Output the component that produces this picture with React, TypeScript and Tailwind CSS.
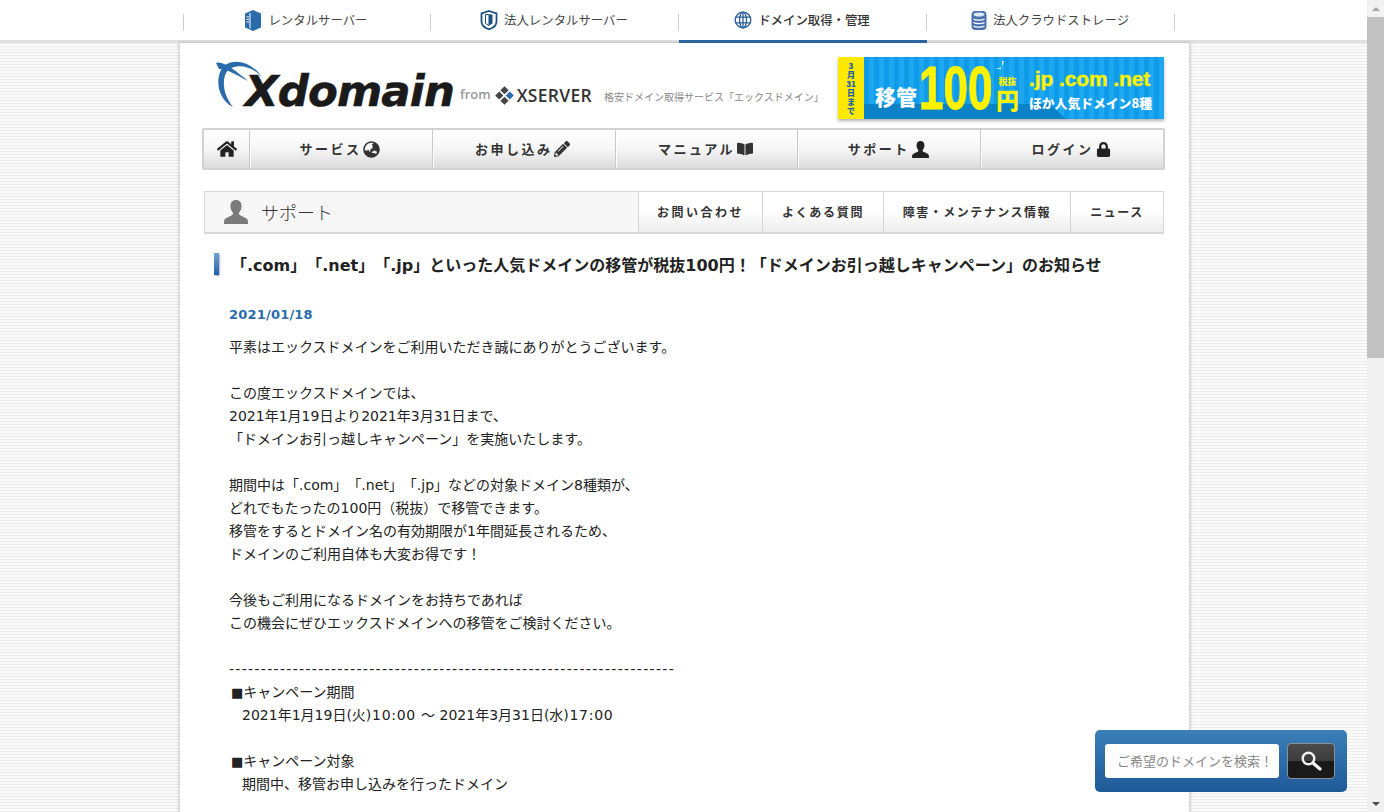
import React from "react";
import { FaHome, FaGlobeAsia, FaPencilAlt, FaBookOpen, FaLock } from "react-icons/fa";

const JP = "font-['Noto_Sans_CJK_JP',sans-serif]";

function L({ children, wide }: { children: React.ReactNode; wide?: boolean }) {
  return <span className={`font-['DejaVu_Sans',sans-serif] ${wide ? "tracking-[0.700px]" : ""}`}>{children}</span>;
}

function Bust({ size, color }: { size: number; color: string }) {
  return (
    <svg width={size} height={size} viewBox="0 0 24 24" fill={color}>
      <path d="M12 0c3.600 0 5.600 2.600 5.600 6 0 3-1.300 5.500-2.800 7 .2 1.500 1 2.200 2.600 2.900 2.700 1.100 5.200 2 6.100 3.700.4.900.5 2.400.5 4.400H0c0-2 .1-3.500.5-4.400.9-1.700 3.400-2.600 6.100-3.700 1.600-.7 2.400-1.400 2.600-2.900-1.500-1.500-2.800-4-2.800-7C6.400 2.600 8.400 0 12 0z" />
    </svg>
  );
}

function ServerIcon() {
  return (
    <svg width="18" height="21" viewBox="0 0 18 21">
      <path d="M9 0l8 3.500v14L9 21l-8-3.500v-14z" fill="#2a6cab" />
      <path d="M6 3v15.500" stroke="#fff" strokeWidth="1" />
      <path d="M2.500 7h2.500M2.500 9.500h2.500M2.500 12h2.500" stroke="#fff" strokeWidth="1" />
    </svg>
  );
}
function ShieldIcon() {
  return (
    <svg width="18" height="20" viewBox="0 0 18 20">
      <path d="M9 1l7.500 2.500v8C16.500 15 13 18 9 19.300 5 18 1.500 15 1.500 11.500v-8z" fill="#fff" stroke="#1d4f80" strokeWidth="1.800" />
      <path d="M9 4.500h3.500v9L9 15.500z" fill="#1d4f80" />
      <path d="M5.500 4.500H9v11l-3.500-2z" fill="#fff" stroke="#1d4f80" strokeWidth="1" />
    </svg>
  );
}
function GlobeIcon() {
  return (
    <svg width="18" height="18" viewBox="0 0 18 18" fill="none" stroke="#2a5f9a" strokeWidth="1.300">
      <circle cx="9" cy="9" r="7.800" />
      <ellipse cx="9" cy="9" rx="3.500" ry="7.800" />
      <path d="M9 1v16M1.500 6.200h15M1.500 11.800h15" />
    </svg>
  );
}
function DbIcon() {
  return (
    <svg width="16" height="21" viewBox="0 0 16 20">
      <rect x="0.500" y="0.500" width="15" height="19" rx="4" fill="#4a72b0" />
      <ellipse cx="8" cy="4" rx="5.500" ry="2" fill="#dfe7f3" />
      <path d="M2.500 8.500c2 1.600 9 1.600 11 0M2.500 12c2 1.600 9 1.600 11 0M2.500 15.500c2 1.600 9 1.600 11 0" stroke="#fff" strokeWidth="1.200" fill="none" />
    </svg>
  );
}

function TopTab({ icon, label, active }: { icon: React.ReactNode; label: string; active?: boolean }) {
  return (
    <div className="relative w-[248px] h-[40px] flex items-center justify-center gap-[6px] pr-[2px] text-[12.400px] text-[#444]">
      <span className="absolute right-0 top-[14px] h-[17px] w-px bg-[#ccc]" />
      {icon}
      <span className={active ? "font-medium text-[#333]" : ""}>{label}</span>
      {active && <span className="absolute left-0 right-0 top-[40px] h-[3px] bg-[#2a64a0]" />}
    </div>
  );
}

function NavCell({ label, icon, last }: { label: string; icon: React.ReactNode; last?: boolean }) {
  return (
    <div className={`flex-1 h-full flex items-center justify-center gap-[2px] pr-[3px] text-[13px] font-bold tracking-[2.500px] text-[#333] ${last ? "" : "border-r border-r-[#c9c9c9]"} border-l border-l-white`}>
      <span>{label}</span>
      {icon}
    </div>
  );
}

function SubTab({ label, w, track }: { label: string; w: string; track: string }) {
  return (
    <div className={`${w} ${track} h-full flex items-center justify-center text-[12px] font-bold text-[#333] border-l border-l-[#d4d4d4] bg-gradient-to-b from-white via-white to-[#ececec]`}>
      {label}
    </div>
  );
}

function Line({ children, indent }: { children?: React.ReactNode; indent?: boolean }) {
  return <p className={`h-[23px] leading-[23px] whitespace-nowrap ${indent ? "pl-[13px]" : ""}`}>{children}</p>;
}

function Square() {
  return <span className="ml-[2px] font-['DejaVu_Sans',sans-serif] text-[13px]">■</span>;
}

export default function App() {
  return (
    <div className={`${JP} [text-spacing-trim:space-all] relative flex h-[812px] w-full overflow-hidden bg-white text-[#222]`}>
      <div className="flex-1 min-w-0 flex flex-col h-full">
        <header className="h-[43px] shrink-0 bg-white border-b-[3px] border-b-[#e0e0e0]">
          <nav className="flex ml-[183px] w-[992px] relative">
            <span className="absolute left-0 top-[14px] h-[17px] w-px bg-[#ccc]" />
            <TopTab icon={<ServerIcon />} label="レンタルサーバー" />
            <TopTab icon={<ShieldIcon />} label="法人レンタルサーバー" />
            <TopTab icon={<GlobeIcon />} label="ドメイン取得・管理" active />
            <TopTab icon={<DbIcon />} label="法人クラウドストレージ" />
          </nav>
        </header>
        <div className="flex-1 min-h-0 flex bg-[repeating-linear-gradient(180deg,#ebebeb_0px,#ebebeb_1px,#fbfbfb_1px,#fbfbfb_3px)]">
          <main className="w-[1011px] ml-[179px] shrink-0 bg-white border-x border-x-[#d9d9d9] shadow-[0_0_3px_rgba(0,0,0,0.25)] pl-[22px] pr-[25px] overflow-hidden">
            <div className="flex items-start h-[85px] pt-[14px]">
              <div className="relative w-[240px] h-[54px] ml-[12px] shrink-0">
                <svg className="absolute left-[1px] top-[3px]" width="50" height="50" viewBox="0 0 50 50">
                  <path d="M18 47C4 40 0 22 6 10 13-3 35-1 47 17 37 6 22 3 13 10 6 18 8 35 18 47z" fill="#2a6cab" />
                  <path d="M1 3C8 0 22 12 33 21 22 15 10 8 4 9z" fill="#2a6cab" />
                </svg>
                <span className="absolute left-[31px] top-[7px] font-['DejaVu_Sans',sans-serif] font-bold italic text-[43.400px] leading-[54px] tracking-[-0.800px] text-[#1a1a1a] [-webkit-text-stroke:0.6px_#1a1a1a]">Xdomain</span>
              </div>
              <div className="flex items-center ml-[6px] mt-[25px] shrink-0">
                <span className="font-['Open_Sans',sans-serif] font-semibold text-[13px] text-[#999]">from</span>
                <svg className="ml-[3px]" width="21" height="21" viewBox="0 0 18 18">
                  <path d="M9 1l3.500 3.500L9 8 5.500 4.500z" fill="#444" />
                  <path d="M4.500 5.500L8 9l-3.500 3.500L1 9z" fill="#444" />
                  <path d="M13.500 5.500L17 9l-3.500 3.500L10 9z" fill="#2a6cab" />
                  <path d="M9 10l3.500 3.500L9 17l-3.500-3.500z" fill="#444" />
                </svg>
                <span className="ml-[2px] font-['Open_Sans',sans-serif] font-semibold text-[17.500px] tracking-[0.300px] text-[#333]">XSERVER</span>
              </div>
              <span className="ml-[12px] mt-[32px] text-[10px] text-[#888] whitespace-nowrap shrink-0">格安ドメイン取得サービス「エックスドメイン」</span>
              <div className="ml-auto w-[326px] h-[62px] shrink-0 flex shadow-[0_2px_3px_rgba(0,0,0,0.3)]">
                <div className="w-[26px] h-full bg-[#fde800] flex flex-col items-center justify-center text-[8px] leading-[9px] font-black text-[#1a5fa8]">
                  <span>3</span><span>月</span><span>31</span><span>日</span><span>ま</span><span>で</span>
                </div>
                <div className="relative flex-1 flex items-center bg-[repeating-linear-gradient(90deg,#0d9bea_0px,#0d9bea_5px,#1fa8f2_5px,#1fa8f2_10px)] overflow-hidden">
                  <div className="absolute left-0 right-[98px] bottom-0 h-[15px] bg-[#0a82c8] [clip-path:polygon(0_0,92%_0,100%_100%,0_100%)]" />
                  <svg className="absolute left-[131px] top-[4px]" width="11" height="11" viewBox="0 0 11 11">
                    <path d="M7 0L9 0 7 6z" fill="#d7f2ff" />
                    <path d="M0 8L6 6.500 6 8z" fill="#d7f2ff" />
                  </svg>
                  <span className="relative ml-[11px] mt-[16px] text-[21px] font-black text-white leading-none">移管</span>
                  <div className="relative ml-[2px] mr-[-30px] w-[103px] h-[62px] shrink-0 origin-left scale-x-[0.71]">
                    <span className="block font-['Liberation_Sans',sans-serif] font-bold text-[62px] leading-[62px] text-[#fff200] [-webkit-text-stroke:1px_#fff200]">100</span>
                  </div>
                  <div className="relative ml-[4px] mt-[11px] flex flex-col items-center shrink-0">
                    <span className="text-[9px] leading-[11px] font-black text-[#fff200]">税抜</span>
                    <span className="text-[23px] leading-[24px] font-black text-[#fff200]">円</span>
                  </div>
                  <div className="relative ml-[10px] mt-[5px] flex flex-col items-start shrink-0">
                    <span className="font-['Liberation_Sans',sans-serif] font-bold text-[21px] leading-[24px] tracking-[-0.100px] text-[#fff200] whitespace-nowrap [-webkit-text-stroke:0.4px_#fff200]">.jp .com .net</span>
                    <span className="text-[12.800px] font-black leading-[24px] text-white whitespace-nowrap">ほか人気ドメイン8種</span>
                  </div>
                </div>
              </div>
            </div>

            <div className="h-[42px] flex items-center border-2 border-[#d2d2d2] rounded-[2px] bg-gradient-to-b from-white via-[#f6f6f6] to-[#dcdcdc] w-[963px]">
              <div className="w-[46px] h-full flex items-center justify-center border-r border-r-[#c9c9c9] shrink-0">
                <FaHome className="text-[20px] text-[#222]" />
              </div>
              <NavCell label="サービス" icon={<FaGlobeAsia className="text-[17px] text-[#333]" />} />
              <NavCell label="お申し込み" icon={<FaPencilAlt className="text-[16px] text-[#333]" />} />
              <NavCell label="マニュアル" icon={<FaBookOpen className="text-[16px] text-[#333]" />} />
              <NavCell label="サポート" icon={<Bust size={17} color="#222" />} />
              <NavCell label="ログイン" icon={<FaLock className="text-[15px] text-[#222]" />} last />
            </div>

            <div className="mt-[21px] ml-[2px] w-[960px] h-[43px] flex items-stretch border border-[#d8d8d8] border-b-2 bg-[conic-gradient(#f3f3f3_25%,#fbfbfb_0_50%,#f3f3f3_0_75%,#fbfbfb_0)] bg-[length:2px_2px]">
              <div className="flex-1 flex items-center pl-[19px] gap-[13px]">
                <Bust size={24} color="#7b7b7b" />
                <span className="text-[18px] font-light text-[#333]">サポート</span>
              </div>
              <SubTab label="お問い合わせ" w="w-[124px]" track="tracking-[2.500px]" />
              <SubTab label="よくある質問" w="w-[121px]" track="tracking-[1.700px]" />
              <SubTab label="障害・メンテナンス情報" w="w-[187px]" track="tracking-[1.500px]" />
              <SubTab label="ニュース" w="w-[93px]" track="tracking-[1.500px]" />
            </div>

            <div className="mt-[19px] ml-[12px] flex items-center h-[22px]">
              <span className="w-[5px] h-[22px] bg-gradient-to-b from-[#6fa3d6] to-[#1d62a6] shadow-[1px_1px_2px_rgba(0,0,0,0.3)]" />
              <h1 className="ml-[12px] pt-[2px] text-[16px] font-bold text-[#222] whitespace-nowrap">「<L>.com</L>」「<L>.net</L>」「<L>.jp</L>」といった人気ドメインの移管が税抜<L>100</L>円！「ドメインお引っ越しキャンペーン」のお知らせ</h1>
            </div>

            <div className="mt-[28px] ml-[27px] text-[14px] text-[#222]">
              <p className="h-[23px] leading-[23px] font-['DejaVu_Sans',sans-serif] font-bold text-[13px] tracking-[0.200px] text-[#2a6cab]">2021/01/18</p>
              <div className="mt-[9px]">
                <Line>平素はエックスドメインをご利用いただき誠にありがとうございます。</Line>
                <Line />
                <Line>この度エックスドメインでは、</Line>
                <Line><L>2021</L>年<L>1</L>月<L>19</L>日より<L>2021</L>年<L>3</L>月<L>31</L>日まで、</Line>
                <Line>「ドメインお引っ越しキャンペーン」を実施いたします。</Line>
                <Line />
                <Line>期間中は「<L>.com</L>」「<L>.net</L>」「<L>.jp</L>」などの対象ドメイン<L>8</L>種類が、</Line>
                <Line>どれでもたったの<L>100</L>円（税抜）で移管できます。</Line>
                <Line>移管をするとドメイン名の有効期限が<L>1</L>年間延長されるため、</Line>
                <Line>ドメインのご利用自体も大変お得です！</Line>
                <Line />
                <Line>今後もご利用になるドメインをお持ちであれば</Line>
                <Line>この機会にぜひエックスドメインへの移管をご検討ください。</Line>
                <Line />
                <Line><span className="inline-block font-['DejaVu_Sans',sans-serif] tracking-[1.320px]">----------------------------------------------------------------------</span></Line>
                <Line><Square />キャンペーン期間</Line>
                <Line indent><L>2021</L>年<L>1</L>月<L>19</L>日<L>(</L>火<L wide>)10:00 </L>〜<L> 2021</L>年<L>3</L>月<L>31</L>日<L>(</L>水<L wide>)17:00</L></Line>
                <Line />
                <Line><Square />キャンペーン対象</Line>
                <Line indent>期間中、移管お申し込みを行ったドメイン</Line>
              </div>
            </div>
          </main>
        </div>
      </div>

      <div className="w-[17px] shrink-0 h-full bg-[#f1f1f1] flex flex-col items-center">
        <span className="h-[17px] flex items-center justify-center">
          <span className="w-0 h-0 border-x-[4px] border-x-transparent border-b-[4px] border-b-[#a3a3a3]" />
        </span>
        <div className="w-full h-[341px] bg-[#c1c1c1]" />
        <div className="flex-1" />
        <span className="h-[17px] flex items-center justify-center">
          <span className="w-0 h-0 border-x-[4px] border-x-transparent border-t-[4px] border-t-[#505050]" />
        </span>
      </div>

      <div className="absolute left-[1095px] top-[730px] w-[252px] h-[62px] rounded-[5px] bg-gradient-to-b from-[#3a7fb8] to-[#1f5a98] flex items-center pl-[10px] gap-[8px]">
        <div className="w-[174px] h-[34px] rounded-[3px] bg-white flex items-center pl-[12px] text-[13px] text-[#888] whitespace-nowrap">ご希望のドメインを検索！</div>
        <div className="w-[48px] h-[36px] rounded-[4px] border border-[#8a9299] bg-[linear-gradient(180deg,#4a4a4a_0%,#3c3c3c_50%,#1a1a1a_50%,#1a1a1a_100%)] flex items-center justify-center">
          <svg width="22" height="22" viewBox="0 0 22 22" fill="none" stroke="#f2f2f2">
            <circle cx="8.500" cy="8.500" r="5.800" strokeWidth="2.400" />
            <path d="M13 13l7 6" strokeWidth="3.200" strokeLinecap="round" />
          </svg>
        </div>
      </div>
    </div>
  );
}
